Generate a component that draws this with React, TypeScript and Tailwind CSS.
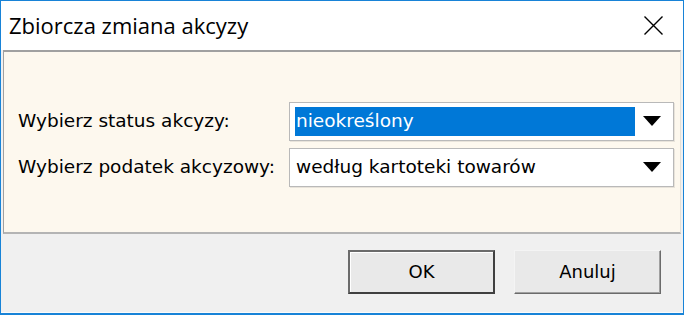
import React from "react";

function Arrow() {
  return (
    <svg width="18" height="10" viewBox="0 0 18 10" className="shrink-0">
      <path d="M0 0 H18 L9 10 Z" fill="#000" />
    </svg>
  );
}

function Combo({ value, selected }: { value: string; selected?: boolean }) {
  return (
    <div className="flex h-[39px] w-[385px] items-center border border-[#b9b9b9] bg-white shadow-[1px_1px_0_#e8e3da] pl-[5px] pr-[12px]">
      <div
        className={
          selected
            ? "flex h-[29px] w-[340px] items-center bg-[#0078d7] pl-[1px] text-white"
            : "flex h-[29px] w-[340px] items-center pl-[1px] text-black"
        }
      >
        {value}
      </div>
      <div className="flex flex-1 justify-end">
        <Arrow />
      </div>
    </div>
  );
}

function Button({ label, primary }: { label: string; primary?: boolean }) {
  return (
    <button
      className={
        primary
          ? "h-[44px] w-[147px] border-2 border-t-[#6b6b6b] border-l-[#6b6b6b] border-r-[#404040] border-b-[#404040] bg-[#e9e9e9] text-[18px] text-black shadow-[inset_1px_1px_0_#fff]"
          : "h-[44px] w-[147px] border border-t-[#f4f4f4] border-l-[#f4f4f4] border-r-[#6b6b6b] border-b-[#6b6b6b] bg-[#e9e9e9] text-[18px] text-black shadow-[inset_-1px_-1px_0_#a0a0a0]"
      }
    >
      {label}
    </button>
  );
}

export default function App() {
  return (
    <div className="h-[315px] w-[684px] overflow-hidden bg-[#1883d7] p-[1px] pb-[2px] font-['DejaVu_Sans',sans-serif]">
      <div className="flex h-full flex-col bg-white">
        <div className="flex h-[49px] items-center justify-between pl-[8px] pr-[20px]">
          <span className="font-['Open_Sans',sans-serif] text-[22px] text-black">
            Zbiorcza zmiana akcyzy
          </span>
          <svg width="19" height="19" viewBox="0 0 19 19">
            <path d="M0.5 0.5 L18.5 18.5 M18.5 0.5 L0.5 18.5" stroke="#000" strokeWidth="1.4" />
          </svg>
        </div>
        <div className="flex flex-1 flex-col bg-[#f0f0f0]">
          <div className="mx-[2px] flex h-[184px] flex-col justify-center gap-[7px] border-t-2 border-l border-r border-t-[#a0a0a0] border-l-[#a0a0a0] border-r-[#e4e0d8] border-b-2 border-b-[#b4b4b4] bg-[#fdf8ee] pt-[6px] pb-[2px] pl-[14px] text-[18.5px] text-black">
            <div className="flex items-center">
              <span className="w-[271px]">Wybierz status akcyzy:</span>
              <Combo value="nieokreślony" selected />
            </div>
            <div className="flex items-center">
              <span className="w-[271px]">Wybierz podatek akcyzowy:</span>
              <Combo value="według kartoteki towarów" />
            </div>
          </div>
          <div className="flex flex-1 items-center justify-end gap-[19px] border-b border-b-[#fbfbfb] pr-[22px] pb-[3px]">
            <Button label="OK" primary />
            <Button label="Anuluj" />
          </div>
        </div>
      </div>
    </div>
  );
}
